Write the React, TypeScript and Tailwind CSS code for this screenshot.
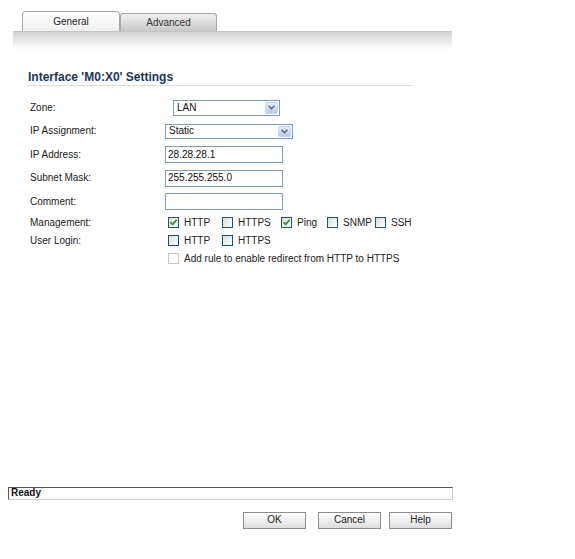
import React from 'react';

const font = { fontFamily: '"Liberation Sans", Arial, sans-serif' };

const Check: React.FC<{ checked?: boolean; disabled?: boolean }> = ({ checked, disabled }) => (
  <span
    className={
      'relative inline-block h-[11px] w-[11px] shrink-0 border ' +
      (disabled
        ? 'border-[#cac8bb] bg-white'
        : 'border-[#1c5180] bg-gradient-to-br from-[#dcdcd7] to-white')
    }
  >
    {checked && (
      <svg viewBox="0 0 9 9" className="absolute left-0 top-0 h-[9px] w-[9px]">
        <path d="M1.5 4.2 L3.6 6.4 L7.6 1.9" fill="none" stroke="#21a121" strokeWidth="1.7" />
      </svg>
    )}
  </span>
);

const CheckItem: React.FC<{ label: string; w: string; checked?: boolean; disabled?: boolean }> = ({
  label,
  w,
  checked,
  disabled,
}) => (
  <span className={'flex items-center gap-[5px] ' + w}>
    <Check checked={checked} disabled={disabled} />
    <span className="text-[#222]">{label}</span>
  </span>
);

const Select: React.FC<{ value: string; w: string; h: string }> = ({ value, w, h }) => (
  <div className={'flex items-stretch border border-[#7f9db9] bg-white ' + w + ' ' + h}>
    <span className="flex flex-1 items-center pl-[3px] leading-none text-[#111]">{value}</span>
    <span className="m-px flex w-[13px] items-center justify-center rounded-[2px] border border-[#c3d3fd] bg-gradient-to-b from-[#e8efff] to-[#b9cbf3]">
      <svg viewBox="0 0 7 5" className="h-[5px] w-[7px]">
        <path d="M0.5 0.8 L3.5 3.8 L6.5 0.8" fill="none" stroke="#4d6185" strokeWidth="1.4" />
      </svg>
    </span>
  </div>
);

const TextBox: React.FC<{ value?: string }> = ({ value }) => (
  <div className="flex h-[17px] w-[118px] items-center border border-[#7f9db9] bg-white pl-[2px] text-[#111]">
    {value}
  </div>
);

const Row: React.FC<{ label: string; h: string; children: React.ReactNode }> = ({ label, h, children }) => (
  <div className={'flex items-center ' + h}>
    <span className="w-[135px] text-[#222]">{label}</span>
    {children}
  </div>
);

const Btn: React.FC<{ label: string; w: string }> = ({ label, w }) => (
  <button
    className={
      'flex h-[17px] items-center justify-center border border-[#8c8c8c] bg-gradient-to-b from-white to-[#dedede] text-[10px] text-[#222] ' +
      w
    }
  >
    {label}
  </button>
);

export default function App() {
  return (
    <div className="relative h-[559px] w-[575px] bg-white text-[10px] leading-[12px]" style={font}>
      {/* tabs */}
      <div className="ml-[13px] w-[439px] pt-[11px]">
        <div className="flex h-[20px] items-end pl-[9px]">
          <div className="flex h-[20px] w-[98px] items-center justify-center rounded-t-[4px] border border-b-0 border-[#a7a7a7] bg-gradient-to-b from-white to-[#efefef] text-[#222]">
            General
          </div>
          <div className="flex h-[18px] w-[97px] items-center justify-center rounded-t-[3px] border border-b-0 border-[#a7a7a7] bg-gradient-to-b from-[#f0f0f0] to-[#c9c9c9] text-[#333]">
            Advanced
          </div>
        </div>
        <div className="h-[19px] border-t border-[#c4c4c4] bg-gradient-to-b from-[#d3d3d3] to-white" />
      </div>

      {/* heading */}
      <div className="ml-[28px] mt-[21px] w-[385px] border-b border-[#dcdcdc] pb-[1px]">
        <span className="text-[12px] font-bold leading-[12px] text-[#17365d]">Interface 'M0:X0' Settings</span>
      </div>

      {/* form */}
      <div className="ml-[30px] mt-[10px]">
        <Row label="Zone:" h="h-[23.5px]">
          <div className="ml-[8px]">
            <Select value="LAN" w="w-[107px]" h="h-[16px]" />
          </div>
        </Row>
        <Row label="IP Assignment:" h="h-[23.5px]">
          <Select value="Static" w="w-[128px]" h="h-[15px]" />
        </Row>
        <Row label="IP Address:" h="h-[23.5px]">
          <TextBox value="28.28.28.1" />
        </Row>
        <Row label="Subnet Mask:" h="h-[23.5px]">
          <TextBox value="255.255.255.0" />
        </Row>
        <Row label="Comment:" h="h-[23.5px]">
          <TextBox />
        </Row>
        <Row label="Management:" h="h-[18px]">
          <div className="ml-[3px] flex items-center">
            <CheckItem label="HTTP" w="w-[54px]" checked />
            <CheckItem label="HTTPS" w="w-[59px]" />
            <CheckItem label="Ping" w="w-[46px]" checked />
            <CheckItem label="SNMP" w="w-[48px]" />
            <CheckItem label="SSH" w="w-[40px]" />
          </div>
        </Row>
        <Row label="User Login:" h="h-[18px]">
          <div className="ml-[3px] flex items-center">
            <CheckItem label="HTTP" w="w-[54px]" />
            <CheckItem label="HTTPS" w="w-[59px]" />
          </div>
        </Row>
        <Row label="" h="h-[18px]">
          <div className="ml-[3px] flex items-center">
            <CheckItem label="Add rule to enable redirect from HTTP to HTTPS" w="w-[260px]" disabled />
          </div>
        </Row>
      </div>

      {/* status bar */}
      <div className="ml-[8px] mt-[219px] flex h-[13px] w-[445px] items-center border border-t-[#555] border-l-[#555] border-b-[#d0d0d0] border-r-[#d0d0d0] pl-[2px] font-bold text-[#111]">
        Ready
      </div>

      {/* buttons */}
      <div className="mt-[12px] flex w-[452px] justify-end">
        <Btn label="OK" w="w-[63px]" />
        <div className="w-[12px]" />
        <Btn label="Cancel" w="w-[63px]" />
        <div className="w-[8px]" />
        <Btn label="Help" w="w-[63px]" />
      </div>
    </div>
  );
}
